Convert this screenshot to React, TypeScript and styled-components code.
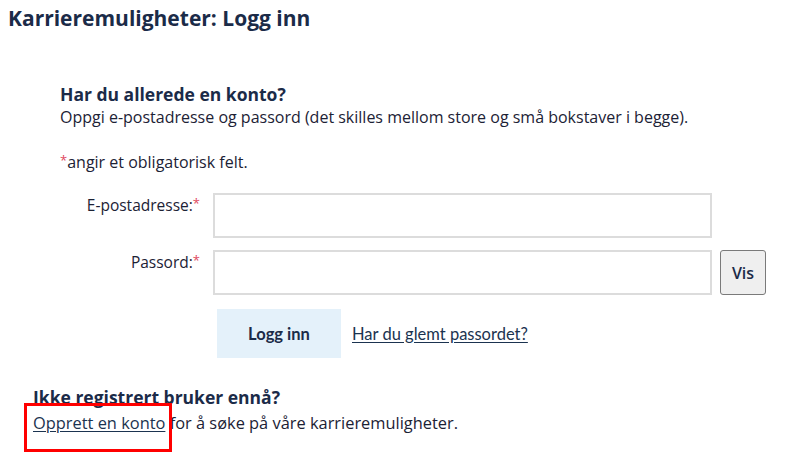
import React from "react";
import styled, { createGlobalStyle } from "styled-components";

const Global = createGlobalStyle`
  html, body { margin: 0; padding: 0; background: #ffffff; }
  body { font-family: "Open Sans", "Noto Sans", sans-serif; color: #1c2235; }
`;

const Page = styled.div`
  width: 789px;
  height: 466px;
  box-sizing: border-box;
  padding: 6px 0 0 8px;
  overflow: hidden;
`;

const Title = styled.h1`
  margin: 0;
  font-size: 21px;
  font-weight: 700;
  color: #1b2b48;
  line-height: 24px;
`;

const Section = styled.section`
  padding: 52px 0 0 52px;
`;

const Heading = styled.h2`
  margin: 0;
  font-size: 17.5px;
  font-weight: 700;
  color: #1b2b48;
  line-height: 24px;
`;

const Text = styled.p<{ $mt?: number; $size?: number }>`
  margin: ${(p) => p.$mt ?? 0}px 0 0;
  font-size: ${(p) => p.$size ?? 16}px;
  line-height: 22px;
  color: #1c2235;
`;

const Req = styled.span`
  color: #e0485e;
  font-size: 13px;
  vertical-align: top;
  line-height: 18px;
`;

const Form = styled.div`
  display: grid;
  grid-template-columns: 140px 499px auto;
  column-gap: 13px;
  row-gap: 12px;
  margin-top: 20px;
  align-items: start;
`;

const Label = styled.label`
  justify-self: end;
  font-size: 15.5px;
  line-height: 22px;
  padding-top: 1px;
  color: #1c2235;
`;

const Input = styled.input`
  box-sizing: border-box;
  width: 499px;
  height: 45px;
  border: 2px solid #dcdcdc;
  background: #fff;
  outline: none;
`;

const VisButton = styled.button`
  box-sizing: border-box;
  margin-left: -5px;
  width: 46px;
  height: 45px;
  border: 1px solid #7a7a7a;
  border-radius: 3px;
  background: #efefef;
  font-family: "Open Sans", sans-serif;
  font-weight: 600;
  font-size: 16px;
  color: #1b2b48;
  padding: 0;
`;

const Actions = styled.div`
  grid-column: 2 / 4;
  display: flex;
  align-items: center;
  gap: 11px;
  padding-left: 4px;
  margin-top: 2px;
`;

const PrimaryButton = styled.button`
  width: 124px;
  height: 49px;
  border: none;
  background: #e4f1fa;
  font-family: Lato, sans-serif;
  font-weight: 700;
  font-size: 16.5px;
  color: #1b2b48;
`;

const Link = styled.a<{ $lato?: boolean }>`
  color: #1b3350;
  text-decoration: underline;
  text-underline-offset: 2px;
  font-family: ${(p) => (p.$lato ? "Lato, sans-serif" : "inherit")};
  font-size: ${(p) => (p.$lato ? "16.5px" : "inherit")};
  cursor: pointer;
`;

const Bottom = styled.section`
  padding: 27px 0 0 25px;
`;

const Highlight = styled.span`
  position: relative;
  &::after {
    content: "";
    position: absolute;
    left: -9px;
    right: -7px;
    top: -8px;
    bottom: -18px;
    border: 3px solid #ff0000;
    pointer-events: none;
  }
`;

export default function App() {
  return (
    <>
      <Global />
      <Page>
        <Title>Karrieremuligheter: Logg inn</Title>
        <Section>
          <Heading>Har du allerede en konto?</Heading>
          <Text>
            Oppgi e-postadresse og passord (det skilles mellom store og små bokstaver i begge).
          </Text>
          <Text $mt={23}>
            <Req>*</Req>angir et obligatorisk felt.
          </Text>
          <Form>
            <Label>
              E-postadresse:<Req>*</Req>
            </Label>
            <Input type="email" />
            <span />
            <Label>
              Passord:<Req>*</Req>
            </Label>
            <Input type="password" />
            <VisButton>Vis</VisButton>
            <span />
            <Actions>
              <PrimaryButton>Logg inn</PrimaryButton>
              <Link $lato>Har du glemt passordet?</Link>
            </Actions>
          </Form>
        </Section>
        <Bottom>
          <Heading>Ikke registrert bruker ennå?</Heading>
          <Text $mt={3} $size={16.4}>
            <Highlight>
              <Link>Opprett en konto</Link>
            </Highlight>{" "}
            for å søke på våre karrieremuligheter.
          </Text>
        </Bottom>
      </Page>
    </>
  );
}
